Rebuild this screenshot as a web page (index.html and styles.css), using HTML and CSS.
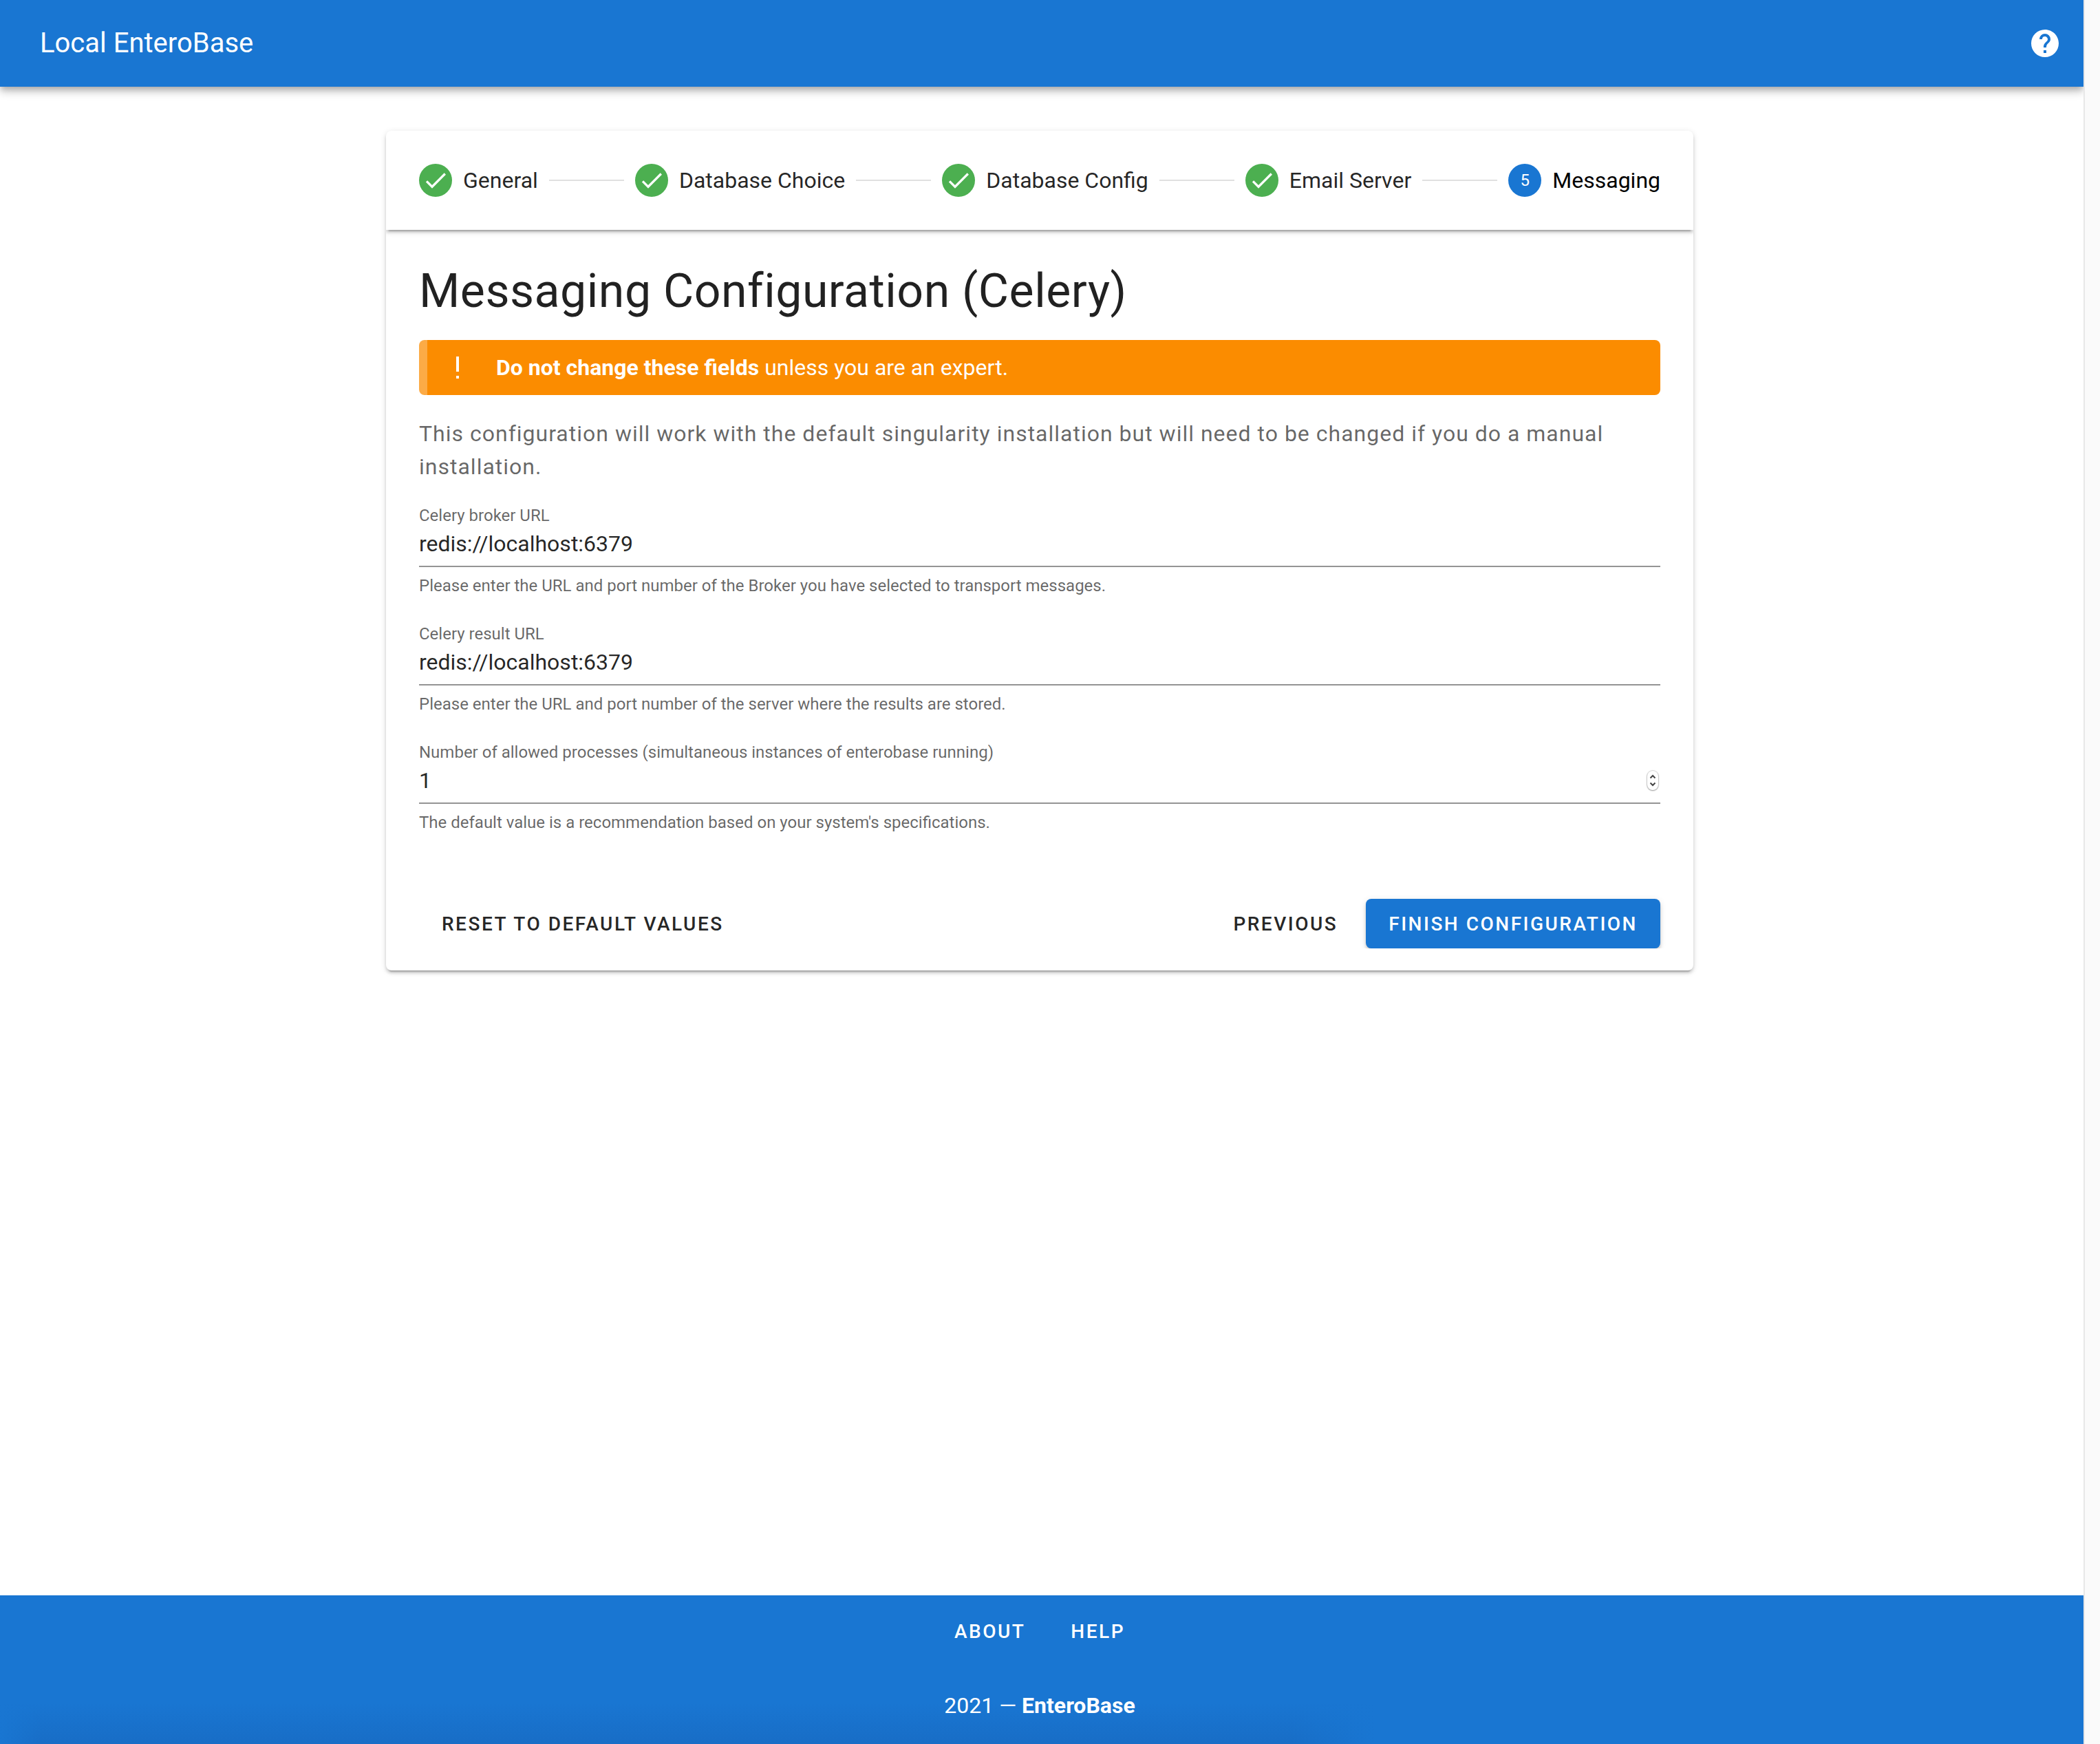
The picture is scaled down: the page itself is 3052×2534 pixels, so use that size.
FILE: index.html
```html
<!DOCTYPE html>
<html lang="en">
<head>
<meta charset="utf-8">
<meta name="viewport" content="width=device-width, initial-scale=1">
<title>Local EnteroBase</title>
<link rel="stylesheet" href="styles.css">
</head>
<body>
<div class="app">
  <header class="app-bar">
    <span class="app-title">Local EnteroBase</span>
    <button class="icon-btn" type="button" aria-label="Help">
      <svg class="icon" viewBox="0 0 24 24" aria-hidden="true"><path d="M15.07,11.25L14.17,12.17C13.45,12.89 13,13.5 13,15H11V14.5C11,13.39 11.45,12.39 12.17,11.67L13.41,10.41C13.78,10.05 14,9.55 14,9C14,7.89 13.1,7 12,7A2,2 0 0,0 10,9H8A4,4 0 0,1 12,5A4,4 0 0,1 16,9C16,9.88 15.64,10.67 15.07,11.25M13,19H11V17H13M12,2A10,10 0 0,0 2,12A10,10 0 0,0 12,22A10,10 0 0,0 22,12C22,6.47 17.5,2 12,2Z"/></svg>
    </button>
  </header>

  <main class="main">
    <section class="card">
      <ol class="stepper">
        <li class="step">
          <span class="step-mark done"><svg viewBox="0 0 24 24" aria-hidden="true"><path d="M21,7L9,19L3.5,13.5L4.91,12.09L9,16.17L19.59,5.59L21,7Z"/></svg></span>
          <span>General</span>
        </li>
        <li class="step">
          <span class="step-mark done"><svg viewBox="0 0 24 24" aria-hidden="true"><path d="M21,7L9,19L3.5,13.5L4.91,12.09L9,16.17L19.59,5.59L21,7Z"/></svg></span>
          <span>Database Choice</span>
        </li>
        <li class="step">
          <span class="step-mark done"><svg viewBox="0 0 24 24" aria-hidden="true"><path d="M21,7L9,19L3.5,13.5L4.91,12.09L9,16.17L19.59,5.59L21,7Z"/></svg></span>
          <span>Database Config</span>
        </li>
        <li class="step">
          <span class="step-mark done"><svg viewBox="0 0 24 24" aria-hidden="true"><path d="M21,7L9,19L3.5,13.5L4.91,12.09L9,16.17L19.59,5.59L21,7Z"/></svg></span>
          <span>Email Server</span>
        </li>
        <li class="step active" aria-current="step">
          <span class="step-mark">5</span>
          <span>Messaging</span>
        </li>
      </ol>

      <form class="content">
        <h1 class="title">Messaging Configuration (Celery)</h1>
        <div class="alert" role="alert">
          <svg class="icon" viewBox="0 0 24 24" aria-hidden="true"><path d="M11,4L13,4L13,15L11,15L11,4M13,18L13,20L11,20L11,18L13,18Z"/></svg>
          <p><strong>Do not change these fields</strong> unless you are an expert.</p>
        </div>
        <p class="intro">This configuration will work with the default singularity installation but will need to be changed if you do a manual installation.</p>

        <div class="fields">
          <div class="field">
            <label for="broker">Celery broker URL</label>
            <div class="control"><input id="broker" type="text" value="redis://localhost:6379" aria-describedby="broker-hint"></div>
            <p class="hint" id="broker-hint">Please enter the URL and port number of the Broker you have selected to transport messages.</p>
          </div>
          <div class="field">
            <label for="result">Celery result URL</label>
            <div class="control"><input id="result" type="text" value="redis://localhost:6379" aria-describedby="result-hint"></div>
            <p class="hint" id="result-hint">Please enter the URL and port number of the server where the results are stored.</p>
          </div>
          <div class="field">
            <label for="processes">Number of allowed processes (simultaneous instances of enterobase running)</label>
            <div class="control">
              <input id="processes" type="number" value="1" min="1" aria-describedby="processes-hint">
              <span class="spinner" aria-hidden="true"><svg viewBox="0 0 16 28"><path d="M4.500 10.500L8 7L11.500 10.500M4.500 17.500L8 21L11.500 17.500"/></svg></span>
            </div>
            <p class="hint" id="processes-hint">The default value is a recommendation based on your system's specifications.</p>
          </div>
        </div>

        <div class="actions">
          <button class="btn reset" type="reset">Reset to default values</button>
          <button class="btn" type="button">Previous</button>
          <button class="btn primary" type="submit">Finish configuration</button>
        </div>
      </form>
    </section>
  </main>

  <footer class="footer">
    <nav class="footer-nav">
      <a class="btn" href="#about">About</a>
      <a class="btn" href="#help">Help</a>
    </nav>
    <p class="copyright">2021 — <strong>EnteroBase</strong></p>
  </footer>
</div>
<div class="scroll-track"></div>
</body>
</html>
```

FILE: styles.css
```css
:root {
  --primary: #1976d2;
  --success: #4caf50;
  --warning: #fb8c00;
  --text: rgba(0, 0, 0, 0.87);
  --text-soft: rgba(0, 0, 0, 0.6);
  --elevation: 0 6px 2px -4px rgba(0, 0, 0, 0.2), 0 4px 4px 0 rgba(0, 0, 0, 0.14), 0 2px 10px 0 rgba(0, 0, 0, 0.12);
}

* {
  box-sizing: border-box;
}

body {
  margin: 0;
  min-height: 100vh;
  display: grid;
  grid-template-columns: minmax(0, 1fr) 24px;
  background: #fff;
  color: var(--text);
  font-family: Roboto, "Liberation Sans", sans-serif;
  font-size: 32px;
  line-height: 48px;
}

h1,
p,
ol {
  margin: 0;
  padding: 0;
}

strong {
  font-weight: 700;
}

.app {
  display: flex;
  flex-direction: column;
}

.scroll-track {
  background: #fafafa;
  border-left: 2px solid #e8e8e8;
}

.icon {
  display: block;
  flex: none;
  width: 48px;
  height: 48px;
  fill: currentColor;
}

/* App bar */
.app-bar {
  display: flex;
  align-items: center;
  justify-content: space-between;
  height: 126px;
  padding: 0 32px 0 58px;
  background: var(--primary);
  color: #fff;
  box-shadow: 0 4px 8px -2px rgba(0, 0, 0, 0.2), 0 8px 10px 0 rgba(0, 0, 0, 0.14), 0 2px 20px 0 rgba(0, 0, 0, 0.12);
  clip-path: inset(0 0 -40px 0);
}

.app-title {
  font-size: 40px;
}

.icon-btn {
  padding: 0;
  border: 0;
  background: none;
  color: inherit;
}

/* Card */
.main {
  flex: 1;
  padding: 64px 70px 64px 64px;
}

.card {
  max-width: 1900px;
  margin: 0 auto;
  overflow: hidden;
  border-radius: 8px;
  background: #fff;
  box-shadow: var(--elevation);
}

.stepper {
  display: flex;
  align-items: center;
  gap: 16px;
  height: 144px;
  padding: 0 48px;
  list-style: none;
  box-shadow: var(--elevation);
}

.step {
  display: flex;
  flex: 1 0 auto;
  align-items: center;
  gap: 16px;
}

.step::after {
  content: "";
  flex: 1;
  height: 2px;
  background: rgba(0, 0, 0, 0.12);
}

.step:last-child {
  flex: none;
}

.step:last-child::after {
  display: none;
}

.step.active {
  color: #000;
}

.step-mark {
  display: grid;
  place-items: center;
  width: 48px;
  height: 48px;
  border-radius: 50%;
  background: var(--primary);
  color: #fff;
  font-size: 24px;
}

.step-mark.done {
  background: var(--success);
}

.step-mark svg {
  width: 40px;
  height: 40px;
  fill: currentColor;
}

.content {
  padding: 48px 48px 32px;
}

.title {
  font-size: 68px;
  font-weight: 400;
  line-height: 82px;
  letter-spacing: 0.0073529412em;
}

.alert {
  display: flex;
  align-items: center;
  gap: 32px;
  margin: 30px 0 32px;
  padding: 16px 32px 16px 20px;
  border-left: 12px solid #fcab46;
  border-radius: 8px;
  background: var(--warning);
  color: #fff;
}

.intro {
  color: var(--text-soft);
  letter-spacing: 0.03125em;
}

/* Fields */
.fields {
  display: grid;
  gap: 42px;
  padding: 32px 0 98px;
}

.field label {
  display: block;
  color: var(--text-soft);
  font-size: 24px;
  line-height: 30px;
}

.control {
  display: flex;
  align-items: center;
  padding: 6px 3px 12px 0;
  border-bottom: 2px solid #949494;
}

.control input {
  flex: 1;
  min-width: 0;
  height: 40px;
  padding: 0;
  border: 0;
  outline: 0;
  background: none;
  color: var(--text);
  font: inherit;
  line-height: 40px;
  appearance: textfield;
}

.control input::-webkit-inner-spin-button {
  display: none;
}

.spinner {
  width: 16px;
  height: 28px;
  border-radius: 8px;
  background: #fff;
  box-shadow: 0 0 1px 1px rgba(0, 0, 0, 0.16), 0 1px 2px rgba(0, 0, 0, 0.3);
}

.spinner svg {
  display: block;
  fill: none;
  stroke: #444;
  stroke-width: 2;
}

.hint {
  padding-top: 14px;
  color: var(--text-soft);
  font-size: 24px;
  line-height: 26px;
}

/* Buttons */
.actions {
  display: flex;
  gap: 8px;
}

.btn {
  display: block;
  height: 72px;
  padding: 0 33px;
  border: 0;
  border-radius: 8px;
  background: none;
  color: inherit;
  font-family: inherit;
  font-size: 28px;
  font-weight: 500;
  line-height: 74px;
  letter-spacing: 0.0892857143em;
  text-decoration: none;
  text-transform: uppercase;
}

.btn.reset {
  margin-right: auto;
}

.btn.primary {
  background: var(--primary);
  color: #fff;
  box-shadow: var(--elevation);
  clip-path: inset(-12px -12px 0 -12px);
}

/* Footer */
.footer {
  display: flex;
  flex-direction: column;
  align-items: center;
  gap: 48px;
  padding: 16px 6px 32px 0;
  background:
    linear-gradient(to right, var(--primary) 0, transparent 2%, transparent 62%, var(--primary) 66%) bottom / 100% 60px no-repeat,
    linear-gradient(to bottom, transparent, #186dc6) bottom / 100% 60px no-repeat,
    var(--primary);
  color: #fff;
}

.footer-nav {
  display: flex;
}
```
